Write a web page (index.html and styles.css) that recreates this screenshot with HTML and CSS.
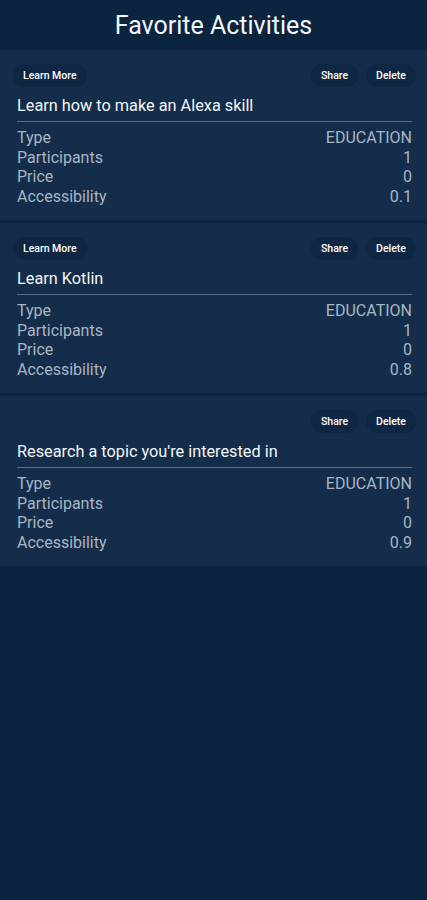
FILE: index.html
```html
<!DOCTYPE html>
<html lang="en">
<head>
    <meta charset="UTF-8">
    <meta name="viewport" content="width=device-width, initial-scale=1.0">
    <title>Favorite Activities</title>
    <link rel="stylesheet" href="styles.css">
</head>
<body>
    <header class="top-bar">
        <h1>Favorite Activities</h1>
    </header>

    <div class="activity-list">
        <div class="activity-card">
            <div class="card-actions">
                <button class="pill-btn">Learn More</button>
                <div class="right-actions">
                    <button class="pill-btn">Share</button>
                    <button class="pill-btn">Delete</button>
                </div>
            </div>
            <h2 class="activity-title">Learn how to make an Alexa skill</h2>
            <div class="details">
                <div class="detail-row"><span>Type</span><span>EDUCATION</span></div>
                <div class="detail-row"><span>Participants</span><span>1</span></div>
                <div class="detail-row"><span>Price</span><span>0</span></div>
                <div class="detail-row"><span>Accessibility</span><span>0.1</span></div>
            </div>
        </div>

        <div class="activity-card">
            <div class="card-actions">
                <button class="pill-btn">Learn More</button>
                <div class="right-actions">
                    <button class="pill-btn">Share</button>
                    <button class="pill-btn">Delete</button>
                </div>
            </div>
            <h2 class="activity-title">Learn Kotlin</h2>
            <div class="details">
                <div class="detail-row"><span>Type</span><span>EDUCATION</span></div>
                <div class="detail-row"><span>Participants</span><span>1</span></div>
                <div class="detail-row"><span>Price</span><span>0</span></div>
                <div class="detail-row"><span>Accessibility</span><span>0.8</span></div>
            </div>
        </div>

        <div class="activity-card">
            <div class="card-actions">
                <div class="right-actions">
                    <button class="pill-btn">Share</button>
                    <button class="pill-btn">Delete</button>
                </div>
            </div>
            <h2 class="activity-title">Research a topic you're interested in</h2>
            <div class="details">
                <div class="detail-row"><span>Type</span><span>EDUCATION</span></div>
                <div class="detail-row"><span>Participants</span><span>1</span></div>
                <div class="detail-row"><span>Price</span><span>0</span></div>
                <div class="detail-row"><span>Accessibility</span><span>0.9</span></div>
            </div>
        </div>
    </div>
</body>
</html>
```

FILE: styles.css
```css
body {
    font-family: Roboto, "Liberation Sans", Arial, sans-serif;
    margin: 0;
    padding: 0;
    background-color: #0b2440;
    color: #fff;
    min-height: 900px;
}
.top-bar {
    height: 50px;
    display: flex;
    align-items: center;
    justify-content: center;
}
.top-bar h1 {
    margin: 0;
    font-size: 25px;
    font-weight: 400;
    color: #f4f6f8;
}
.activity-list {
    display: flex;
    flex-direction: column;
    gap: 3px;
}
.activity-card {
    background-color: #132d4a;
    padding: 14px 15px 14px 17px;
}
.card-actions {
    display: flex;
    align-items: center;
    justify-content: space-between;
    height: 23px;
    margin-left: -4px;
}
.right-actions {
    display: flex;
    gap: 8px;
    margin-left: auto;
    margin-right: -4px;
}
.pill-btn {
    height: 23px;
    padding: 0 10px;
    background-color: #0f2742;
    color: #fff;
    border: none;
    border-radius: 12px;
    font-family: Roboto, "Liberation Sans", Arial, sans-serif;
    font-size: 10.5px;
    font-weight: 500;
    cursor: pointer;
}
.activity-title {
    margin: 8px 0 0;
    font-size: 16.3px;
    font-weight: 400;
    line-height: 21px;
    color: #f4f6f8;
    padding-bottom: 5px;
    border-bottom: 1px solid #5c7188;
}
.details {
    margin-top: 6px;
}
.detail-row {
    display: flex;
    justify-content: space-between;
    font-size: 16px;
    line-height: 19.5px;
    color: #aab5c3;
}
```
